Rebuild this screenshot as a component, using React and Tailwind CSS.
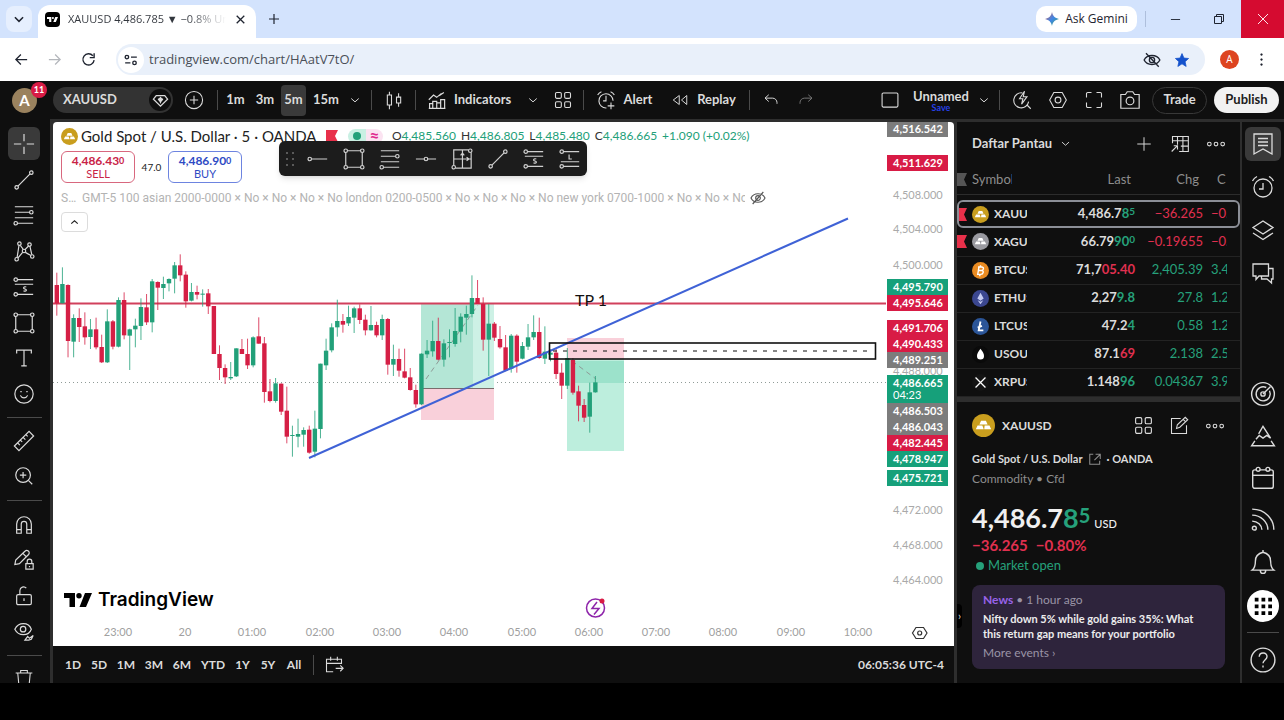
import React from 'react'
import clsx from 'clsx'

const GREEN = '#22a079'
const RED = '#d51f45'

// y positions of each bar: [up, high, bodyTop, bodyBottom, low], thirds of a pixel under 240
const BARS = [
  [0, 98, 135, 190, 227], [1, 82, 132, 190, 190], [0, 133, 135, 303, 352], [1, 223, 234, 305, 352],
  [0, 205, 234, 261, 306], [0, 217, 259, 292, 314], [1, 237, 268, 291, 327], [0, 233, 268, 322, 328],
  [0, 284, 321, 367, 369], [1, 208, 244, 367, 369], [0, 240, 244, 320, 328], [1, 172, 180, 320, 322],
  [0, 157, 180, 286, 298], [1, 266, 268, 287, 390], [1, 236, 257, 268, 322], [1, 175, 201, 258, 300],
  [0, 162, 202, 247, 255], [1, 117, 124, 247, 277], [0, 124, 126, 143, 210], [1, 110, 132, 144, 177],
  [1, 115, 117, 130, 154], [1, 66, 76, 116, 160], [0, 43, 76, 106, 124], [0, 94, 104, 184, 203],
  [1, 129, 156, 182, 184], [0, 137, 156, 164, 178], [1, 148, 161, 163, 200], [0, 147, 160, 199, 222],
  [0, 198, 198, 342, 342], [0, 316, 342, 384, 420], [0, 373, 384, 412, 432], [1, 366, 411, 415, 420],
  [1, 325, 325, 409, 411], [0, 297, 327, 342, 342], [0, 296, 342, 376, 387], [1, 289, 292, 376, 382],
  [0, 232, 289, 311, 311], [0, 291, 310, 456, 488], [0, 417, 454, 483, 487], [1, 414, 430, 483, 488],
  [0, 430, 431, 515, 525], [0, 440, 512, 590, 610], [1, 557, 585, 588, 650], [1, 536, 582, 590, 622],
  [1, 562, 570, 584, 620], [0, 557, 569, 638, 641], [1, 512, 566, 635, 652], [1, 371, 371, 567, 595],
  [1, 296, 332, 376, 390], [1, 250, 262, 331, 337], [1, 179, 243, 262, 290], [0, 222, 243, 254, 278],
  [1, 197, 231, 250, 258], [1, 200, 205, 233, 279], [0, 193, 205, 240, 252], [0, 224, 239, 271, 286],
  [1, 198, 255, 271, 272], [0, 245, 255, 286, 292], [1, 224, 237, 286, 300], [0, 234, 237, 374, 404],
  [1, 314, 357, 374, 408], [0, 326, 357, 392, 410], [0, 326, 394, 413, 415], [0, 384, 412, 450, 452],
  [0, 434, 450, 493, 503], [1, 340, 341, 493, 495], [1, 300, 332, 343, 354], [1, 242, 303, 334, 350],
  [0, 233, 303, 359, 361], [1, 298, 310, 359, 380], [1, 268, 306, 308, 352], [1, 204, 273, 312, 320],
  [1, 220, 230, 275, 307], [1, 197, 222, 233, 284], [1, 106, 174, 222, 232], [0, 120, 174, 192, 192],
  [0, 172, 192, 299, 332], [1, 192, 251, 299, 408], [0, 246, 251, 293, 303], [0, 258, 297, 322, 326],
  [0, 285, 322, 392, 394], [1, 282, 287, 386, 398], [0, 283, 287, 365, 398], [1, 306, 318, 356, 358],
  [1, 252, 292, 320, 330], [1, 226, 276, 292, 300], [0, 233, 276, 354, 356], [1, 259, 335, 356, 372],
  [1, 328, 338, 344, 364], [0, 325, 338, 402, 417], [0, 370, 398, 437, 477], [1, 324, 354, 437, 447],
  [0, 354, 360, 458, 464], [0, 437, 454, 497, 544], [0, 477, 495, 533, 546], [1, 428, 457, 530, 578],
  [1, 408, 427, 457, 458],
]

const AXIS = [
  ['4,508.000', 195], ['4,504.000', 229], ['4,500.000', 265], ['4,488.000', 371],
  ['4,472.000', 510], ['4,468.000', 545], ['4,464.000', 580],
]

const TAGS = [
  ['4,516.542', 129, '#7c7c7c'], ['4,511.629', 163, '#d81b45'], ['4,495.790', 287, '#16a07a'],
  ['4,495.646', 303, '#d81b45'], ['4,491.706', 328, '#d81b45'], ['4,490.433', 344, '#d81b45'],
  ['4,489.251', 360, '#7c7c7c'], ['4,486.503', 411, '#7c7c7c'], ['4,486.043', 427, '#7c7c7c'],
  ['4,482.445', 443, '#d81b45'], ['4,478.947', 459, '#16a07a'], ['4,475.721', 478, '#16a07a'],
]

const TIMES = [
  ['23:00', 118], ['20', 185], ['01:00', 252], ['02:00', 320], ['03:00', 387], ['04:00', 454],
  ['05:00', 522], ['06:00', 589], ['07:00', 656], ['08:00', 723], ['09:00', 791], ['10:00', 858],
]

const Icon = ({ size = 24, className, children, sw = 1.3 }) => (
  <svg
    width={size}
    height={size}
    viewBox="0 0 24 24"
    fill="none"
    stroke="currentColor"
    strokeWidth={sw}
    className={clsx('shrink-0', className)}
    aria-hidden="true"
  >
    {children}
  </svg>
)

const Dot = ({ x, y }) => <circle cx={x} cy={y} r="1.9" />

const icons = {
  cross: <path d="M12 1v8M12 15v8M1 12h8M15 12h8" />,
  trend: <><Dot x={4} y={20} /><Dot x={20} y={4} /><path d="M5.4 18.6 18.6 5.4" /></>,
  fib: <><path d="M2 3h20M2 9h16M2 15h20M5 21h17" /><Dot x={20} y={9} /><Dot x={3} y={21} /></>,
  pattern: (
    <>
      <Dot x={4} y={21} /><Dot x={7} y={4} /><Dot x={12} y={12} /><Dot x={18} y={5} /><Dot x={21} y={18} />
      <path d="m4.500 19 2-13M8 6l3 4M13 10.500l4-4M18.500 7l2 9M5.500 19.500 10.500 13.500M13.500 13.500l6 3.500" />
    </>
  ),
  short: (
    <>
      <path d="M5 4h17M2 9h20M5 20h17" /><Dot x={3} y={4} /><Dot x={3} y={20} />
      <path d="M14.500 12c-3-1-4 1.800-1.500 2.200s2 3-1.500 2" />
    </>
  ),
  long: (
    <>
      <path d="M5 4h17M5 20h17M2 15h20M11 7v5h3" /><Dot x={3} y={4} /><Dot x={3} y={20} />
    </>
  ),
  rect: <><path d="M5 3h14M5 21h14M3 5v14M21 5v14" /><Dot x={3} y={3} /><Dot x={21} y={3} /><Dot x={3} y={21} /><Dot x={21} y={21} /></>,
  text: <path d="M4 7V3.500h16V7M12 3.500v17M9 20.500h6" />,
  smile: <><circle cx="12" cy="12" r="10" /><path d="M8 9.500h1.500M14.500 9.500H16M8 13.500c1.500 3.500 6.500 3.500 8 0" /></>,
  ruler: <path d="m1.500 17.500 16-16 5 5-16 16zM5 14l2.500 2.500M8 11l2 2M11 8l2.500 2.500M14 5l2 2" />,
  zoom: <><circle cx="11" cy="11" r="8" /><path d="M11 7.500v7M7.500 11h7M17 17l4 4" /></>,
  magnet: <path d="M4 21V11a8 8 0 0 1 16 0v10h-5V11a3 3 0 0 0-6 0v10zM4 17h5M15 17h5" />,
  pencilLock: (
    <>
      <path d="m2 17 1-5L13 2.500a2.500 2.500 0 0 1 4 3.500L7 16zM11 5l3.500 3.500" />
      <path d="M14 16h8v6h-8zM15.500 16v-2.500a2.500 2.500 0 0 1 5 0V16M18 18.500v1.500" />
    </>
  ),
  unlock: <><rect x="4" y="10.500" width="16" height="11" rx="1.500" /><path d="M7.500 10V6a4 4 0 0 1 7-2.500M12 14.500v3" /></>,
  eye: (
    <>
      <path d="M2 10c4-8 15-8 18 0-3 8-14 8-18 0z" /><circle cx="11" cy="10" r="3" />
      <path d="m13 22 3-4 2 2 4-3-2 4-3 1z" />
    </>
  ),
  trash: <path d="M2 6h20M8 6V3h8v3M4.500 6l1.500 16h12l1.500-16" />,
  hline: <><path d="M5 12h17" /><Dot x={3} y={12} /></>,
  hray: <><path d="M1 12h9M14 12h9" /><Dot x={12} y={12} /></>,
  gann: (
    <>
      <path d="M5 22h17V5M19 2H3v17M12.500 2v20M3 12h19M12.500 5.500l-2 2.500M12.500 5.500l2 2.500M19.500 12 17 10M19.500 12 17 14" />
      <Dot x={3} y={21} /><Dot x={21} y={3} />
    </>
  ),
  chevron: <path d="m7 10 5 4.500 5-4.500" />,
  chevronUp: <path d="m6 14 6-5 6 5" />,
  plusCircle: <><circle cx="12" cy="12" r="10.300" /><path d="M12 7v10M7 12h10" /></>,
  candles: <path d="M4 6h5v12H4zM6.500 2v4M6.500 18v5M15 8.500h5v7h-5zM17.500 4v4.500M17.500 15.500V20" />,
  indicators: <><path d="M1 11l6-6 4 3 6-5M14 6l6-4" /><path d="M2 22v-6h4v6M6 22v-9h5v9M11 22v-7h5v7M16 22V11h5v11zM1 22h21" /></>,
  grid: <><rect x="3" y="3" width="7" height="7" rx="1.500" /><rect x="14" y="3" width="7" height="7" rx="1.500" /><rect x="3" y="14" width="7" height="7" rx="1.500" /><rect x="14" y="14" width="7" height="7" rx="1.500" /></>,
  alert: <><path d="M20.500 13a8.500 8.500 0 1 0-8 8.500M12 7v6H8.500M2 6c1-2 2.500-3.200 4.500-4M22 6c-1-2-2.500-3.200-4.500-4M18 15v8M14 19h8" /></>,
  clock: <><circle cx="12" cy="13" r="9" /><path d="M12 8v6H8M1.500 6C2.500 4 4 2.500 6 1.500M22.500 6c-1-2-2.500-3.500-4.500-4.500" /></>,
  replay: <path d="M11 6v12l-8-6zM21 6v12l-7-6z" />,
  undo: <path d="M9 5 4 9.500 9 14M4 9.500h10a6 6 0 0 1 6 6V17" />,
  redo: <path d="m15 5 5 4.500-5 4.500M20 9.500H10a6 6 0 0 0-6 6V17" />,
  square: <rect x="2.500" y="3.500" width="19" height="17" rx="1.500" />,
  flash: <><path d="M12.500 3.500A9 9 0 1 0 20 14M18 18l4.500 4.500" /><path d="m15 1.500-6 9h4l-1.500 6.500 6.500-9h-4.500z" /></>,
  hex: <><path d="M7 3h10l5 9-5 9H7l-5-9z" /><circle cx="12" cy="12" r="3.500" /></>,
  full: <path d="M3 9V4.500A1.500 1.500 0 0 1 4.500 3H9M15 3h4.500A1.500 1.500 0 0 1 21 4.500V9M21 15v4.500a1.500 1.500 0 0 1-1.500 1.500H15M9 21H4.500A1.500 1.500 0 0 1 3 19.500V15" />,
  camera: <><path d="M2 6h5l2-3h6l2 3h5v15H2z" /><circle cx="12" cy="13" r="4.200" /></>,
  plus: <path d="M12 3v18M3 12h18" />,
  table: <path d="M3 11V3h19v18H11M3 8h19M9 3v10M15.500 3v18M13 14.500h9M2 21l7-7M4.500 14H9v4.500" />,
  dots: <><circle cx="4" cy="12" r="2.200" /><circle cx="12" cy="12" r="2.200" /><circle cx="20" cy="12" r="2.200" /></>,
  list: <path d="M3 2h18v20l-9-5-9 5zM7 6.500h10M7 10h10M7 13.500h10" />,
  layers: <path d="m12 3 10 6.500-10 6.500L2 9.500zM2 15l10 6.500L22 15" />,
  chat: <path d="M2 3h15.500v12H8l-3 3.500V15H2zM17.500 7.500H22V18h-1.500v4L16 18h-5.500v-3" />,
  radar: <><circle cx="12" cy="12" r="10.500" /><path d="M18 9a6.500 6.500 0 1 1-3-3M12 12l7-7" /><circle cx="12" cy="12" r="2" /></>,
  pyramid: <path d="m8 10 4-7 7 11-3.500-2.500L12 14l-3.500-2.500L5.500 15M4.500 16.500 1.500 21h21l-3-4.500" />,
  calendar: <><rect x="2.500" y="4.500" width="19" height="17" rx="2" /><path d="M2.500 9.500h19" /><circle cx="7.500" cy="4" r="1.800" fill="#0f0f0f" /><circle cx="16.500" cy="4" r="1.800" fill="#0f0f0f" /></>,
  rss: <><path d="M2 2c12 0 20 9 20 19M2 7.500c8 0 14.500 6.500 14.500 13.500M2 13c5 0 9 4 9 8" /><circle cx="4" cy="19.500" r="1.800" /></>,
  bell: <path d="M2 19.500h20c-2.500-2-3-4-3-8.500C19 6.500 16 4 12 3 8 4 5 6.500 5 11c0 4.500-.5 6.500-3 8.500zM12 1v2M9.500 19.500c0 4 5 4 5 0" />,
  help: <><circle cx="12" cy="12" r="11" /><path d="M8.500 9c.3-5 7.500-4.300 7.200 0C15.500 12 12 12 12 15M12 17v2" /></>,
  edit: <path d="M14 3H3v18h18V11M9 15l1-4.500 9.500-9 3 3-9.500 9zM17 4l3 3" />,
  link: <path d="M9 4H3v17h17v-6M13 4h8v8M21 4 11 14" />,
  goto: <path d="M3 10h18V5H3v15h8M8 2v5M16 2v5M14 16h9M19.500 12.500 23 16l-3.500 3.500" />,
  eyeOff: <path d="M1.500 12c4-8.500 17-8.500 21 0-4 8.500-17 8.500-21 0zM4 21 20 3M15.500 12a3.500 3.500 0 1 1-7 0 3.500 3.500 0 0 1 7 0z" />,
  gem: <><path d="M6 5h12l4 5-10 10L2 10z" /><path d="M12 8c1 1.500 1.500 2 3.500 2.500-2 .5-2.500 1.500-3.500 4-1-2.500-1.500-3.500-3.500-4C10.500 10 11 9.500 12 8z" fill="currentColor" /></>,
}

const IconButton = ({ name, label, className, size, sw }) => (
  <button type="button" aria-label={label || name} className={clsx('flex shrink-0 items-center justify-center', className)}>
    <Icon size={size} sw={sw}>{icons[name]}</Icon>
  </button>
)

const Sep = ({ className }) => <div className={clsx('h-5 w-px shrink-0 bg-[#4a4a4a]', className)} />

const GoldIcon = ({ className, color = '#c99e1e' }) => (
  <svg viewBox="0 0 24 24" className={clsx('shrink-0', className)} aria-hidden="true">
    <circle cx="12" cy="12" r="12" fill={color} />
    <path d="M9.500 7h5l1.800 4H7.700zM5.800 12h5l1.400 4H4zM13.200 12h5l1.800 4h-7.200z" fill="#fff" />
  </svg>
)

const TVMark = ({ className }) => (
  <svg viewBox="0 0 28 14" className={className} fill="currentColor" aria-hidden="true">
    <path d="M0 0h11v14H5.500V5H0zM21 0h7l-6 14h-6.500z" />
    <circle cx="15" cy="2.700" r="2.700" />
  </svg>
)

const BrowserChrome = () => (
  <div className="font-['Open_Sans',sans-serif] text-[#1f2430]">
    <div className="flex h-[38px] items-center bg-[#d3e3fd]">
      <button type="button" aria-label="Search tabs" className="ml-1.5 flex size-[26px] items-center justify-center rounded-lg bg-[#e6effe]">
        <Icon size={14} sw={2.6}><path d="m5 9 7 7 7-7" /></Icon>
      </button>
      <div className="ml-1.5 flex h-[33px] w-[218px] items-center self-end rounded-t-xl bg-white pb-1 pl-[7px] pr-2">
        <span className="flex size-[15px] items-center justify-center rounded-sm bg-black text-white"><TVMark className="w-[11px]" /></span>
        <span className="ml-2 w-[158px] overflow-hidden whitespace-nowrap bg-linear-to-r from-[#32363d] from-75% to-white bg-clip-text text-[11px] text-transparent">
          XAUUSD 4,486.785 ▼ −0.8% Unnamed
        </span>
        <button type="button" aria-label="Close tab" className="ml-2"><Icon size={13} sw={2.4}><path d="M5 5l14 14M19 5 5 19" /></Icon></button>
      </div>
      <button type="button" aria-label="New tab" className="ml-3"><Icon size={12} sw={2.4}><path d="M12 2v20M2 12h20" /></Icon></button>
      <div className="flex-1" />
      <button type="button" className="flex h-[26px] w-[101px] items-center justify-center gap-1.5 rounded-[10px] bg-white text-[12px] font-medium">
        <svg viewBox="0 0 24 24" className="size-3.5" aria-hidden="true">
          <defs>
            <linearGradient id="spark" x1="0" y1="0" x2="1" y2="1">
              <stop offset="0" stopColor="#e0604c" /><stop offset=".5" stopColor="#3f86e8" /><stop offset="1" stopColor="#3aa560" />
            </linearGradient>
          </defs>
          <path d="M12 0c1.500 7 5 10.500 12 12-7 1.500-10.500 5-12 12-1.500-7-5-10.500-12-12C7 10.500 10.500 7 12 0z" fill="url(#spark)" />
        </svg>
        Ask Gemini
      </button>
      <div className="ml-2 h-4 w-px bg-[#aebfdc]" />
      <button type="button" aria-label="Minimize" className="ml-2 flex w-[43px] justify-center"><Icon size={11} sw={2}><path d="M2 12h20" /></Icon></button>
      <button type="button" aria-label="Restore" className="flex w-11 justify-center"><Icon size={12} sw={2}><path d="M3 7h14v14H3zM7 7V3h14v14h-4" /></Icon></button>
      <button type="button" aria-label="Close" className="flex h-full w-[43px] items-center justify-center bg-[#d50b30] text-white"><Icon size={12} sw={1.8}><path d="M2 2l20 20M22 2 2 22" /></Icon></button>
    </div>
    <div className="flex h-[43px] items-center bg-white">
      <button type="button" aria-label="Back" className="ml-[14px]"><Icon size={15} sw={2}><path d="M11 4 3 12l8 8M3 12h18" /></Icon></button>
      <button type="button" aria-label="Forward" className="ml-[18px] text-[#b4b7bc]"><Icon size={15} sw={2}><path d="m13 4 8 8-8 8M21 12H3" /></Icon></button>
      <button type="button" aria-label="Reload" className="ml-[19px]"><Icon size={15} sw={2.2}><path d="M19 6a9 9 0 1 0 2 7M21 2v7h-7" /></Icon></button>
      <div className="ml-5 flex h-[31px] flex-1 items-center rounded-full bg-[#e9f0fa]">
        <span className="ml-0.5 flex size-[26px] items-center justify-center rounded-full bg-white">
          <Icon size={14} sw={2.3}><circle cx="5" cy="7" r="3" /><path d="M12 7h10M2 17h9" /><circle cx="18" cy="17" r="3" /></Icon>
        </span>
        <input aria-label="Address" defaultValue="tradingview.com/chart/HAatV7tO/" className="ml-[5px] w-60 bg-transparent text-[13px] text-[#4a4f57] outline-none" />
        <div className="flex-1" />
        <Icon size={18} sw={1.8}><path d="M1.500 12c4-8 17-8 21 0-4 8-17 8-21 0zM4 3l17 18" /><circle cx="12" cy="12" r="3.500" /></Icon>
        <Icon size={14} className="ml-[14px] mr-4 text-[#1452cc]"><path fill="currentColor" d="m12 1 3.300 7.700 8 .7-6 5.400 1.800 8.200L12 18.600 4.900 23l1.800-8.200-6-5.400 8-.7z" /></Icon>
      </div>
      <span className="ml-[15px] flex size-[19px] items-center justify-center rounded-full bg-[#dd4420] text-[10px] text-white">A</span>
      <button type="button" aria-label="Menu" className="mx-[15px]"><Icon size={15}><path fill="currentColor" d="M11 3h2v2h-2zM11 11h2v2h-2zM11 19h2v2h-2z" /></Icon></button>
    </div>
  </div>
)

const Header = () => (
  <header className="flex h-[38px] shrink-0 items-center bg-[#0f0f0f] text-[13px] font-bold">
    <div className="relative ml-3 flex size-[25px] items-center justify-center rounded-full bg-[#9a825e] text-[15px] text-white">
      A
      <span className="absolute -right-2.5 -top-1.5 flex size-4 items-center justify-center rounded-full bg-[#d81b45] text-[9px]">11</span>
    </div>
    <button type="button" className="ml-4 flex h-[26px] w-[120px] items-center justify-between rounded-full bg-[#333] pl-2.5 pr-0.5">
      XAUUSD
      <span className="flex size-[22px] items-center justify-center rounded-full bg-[#0f0f0f]"><Icon size={17} sw={1.8}>{icons.gem}</Icon></span>
    </button>
    <IconButton name="plusCircle" label="Compare" size={20} className="ml-1 w-[34px]" />
    <Sep className="ml-1.5 mr-[3px]" />
    <button type="button" className="w-[29px]">1m</button>
    <button type="button" className="w-[30px]">3m</button>
    <button type="button" className="ml-px h-[31px] w-[25px] rounded bg-[#3a3a3a]">5m</button>
    <button type="button" className="ml-1 w-[32px]">15m</button>
    <IconButton name="chevron" label="Intervals" size={18} className="ml-1 w-[18px]" />
    <Sep className="ml-[7px]" />
    <IconButton name="candles" size={20} className="w-[43px]" />
    <Sep />
    <button type="button" className="ml-3 flex items-center gap-[7px]"><Icon size={19} sw={1.5}>{icons.indicators}</Icon><span className="w-[58px] text-left">Indicators</span></button>
    <IconButton name="chevron" label="Favorites" size={18} className="ml-3 w-[18px]" />
    <IconButton name="grid" label="Templates" size={20} className="ml-2.5 w-[21px]" />
    <Sep className="ml-2.5" />
    <button type="button" className="ml-3 flex items-center gap-[7px]"><Icon size={20}>{icons.alert}</Icon><span className="w-[30px]">Alert</span></button>
    <button type="button" className="ml-[18px] flex items-center gap-[7px]"><Icon size={18}>{icons.replay}</Icon><span className="w-[41px]">Replay</span></button>
    <Sep className="ml-3" />
    <IconButton name="undo" size={18} className="w-[41px]" />
    <IconButton name="redo" size={18} className="w-[29px] text-[#777]" />
    <div className="flex-1" />
    <IconButton name="square" label="Layout" size={20} />
    <div className="ml-3 flex w-[58px] flex-col items-center">
      <span className="leading-[14px]">Unnamed</span>
      <button type="button" className="text-[9px] leading-[9px] text-[#2540e8]">Save</button>
    </div>
    <IconButton name="chevron" label="Layouts" size={18} className="ml-[5px]" />
    <Sep className="ml-1.5" />
    <IconButton name="flash" label="Quick search" size={20} className="ml-1 w-9" />
    <IconButton name="hex" label="Settings" size={20} className="w-9" />
    <IconButton name="full" label="Fullscreen" size={20} className="w-9" />
    <IconButton name="camera" label="Snapshot" size={22} className="w-9" />
    <button type="button" className="ml-1 h-[27px] w-[55px] rounded-full border border-[#383838]">Trade</button>
    <button type="button" className="ml-[7px] mr-[5px] h-[26px] w-[65px] rounded-full bg-[#f2f2f2] text-[#1c1c1c]">Publish</button>
  </header>
)

const ToolGroup = ({ names, className }) => (
  <div className={clsx('flex w-full shrink-0 flex-col items-center justify-around', className)}>
    {names.map((n) => (
      <IconButton key={n} name={n} size={22} className={clsx('h-[33px] w-8 rounded-md', n === 'cross' && 'bg-[#3a3a3a]')} />
    ))}
  </div>
)

const LeftTools = () => (
  <aside className="flex w-[50px] shrink-0 flex-col items-center overflow-hidden bg-[#0f0f0f] pr-0.5 pt-[7px]">
    <ToolGroup className="h-[286px]" names={['cross', 'trend', 'fib', 'pattern', 'short', 'rect', 'text', 'smile']} />
    <div className="my-[5px] h-px w-[35px] shrink-0 bg-[#4a4a4a]" />
    <ToolGroup className="h-[71px]" names={['ruler', 'zoom']} />
    <div className="my-1.5 h-px w-[35px] shrink-0 bg-[#4a4a4a]" />
    <ToolGroup className="h-[142px]" names={['magnet', 'pencilLock', 'unlock', 'eye']} />
    <div className="mb-3 mt-1.5 h-px w-[35px] shrink-0 bg-[#4a4a4a]" />
    <IconButton name="trash" size={20} />
  </aside>
)

const Chart = () => (
  <svg viewBox="53 122 901 524" className="block size-full" fontFamily="Lato, sans-serif" role="img" aria-label="XAUUSD 5 minute chart">
    <path d="M53 382.500H886" stroke="#8f9b97" strokeDasharray="1 3" />
    <rect x="421" y="304" width="73" height="85" fill="#cdf1e5" />
    <rect x="421" y="304" width="52" height="85" fill="#b4e6d6" />
    <rect x="421" y="389" width="73" height="31" fill="#f9d0da" />
    <path d="M421 388.500h73" stroke="#7a6c6c" />
    <rect x="567" y="338" width="57" height="21" fill="#f9d0da" />
    <rect x="567" y="359" width="57" height="92" fill="#bdeedd" />
    <rect x="571" y="361" width="53" height="22" fill="#9ce2cb" />
    <path d="M426 379l52-74M572 361l24 18" stroke="#8d9a96" strokeDasharray="5 4" />
    <path d="M53 303.500H886" stroke="#d1405c" strokeWidth="2" />
    {BARS.map(([up, h, t, b, l], i) => {
      const x = 56.8 + 5.61 * i
      const color = up ? GREEN : RED
      return (
        <g key={i} fill={color}>
          <rect x={x - 0.5} y={240 + h / 3} width="1" height={(l - h) / 3} opacity=".8" />
          <rect x={x - 2.2} y={240 + t / 3} width="4.4" height={Math.max(1, (b - t) / 3)} />
        </g>
      )
    })}
    <path d="M309 458 848 218.500" stroke="#3f62d6" strokeWidth="2" />
    <rect x="549.500" y="343" width="326" height="16" fill="none" stroke="#111" strokeWidth="1.600" />
    <path d="M553 351h320" stroke="#111" strokeDasharray="4 6" />
    <text x="575" y="306" fontSize="16" fill="#111">TP 1</text>

    <g fontSize="11" fill="#a9a9a9">
      {AXIS.map(([label, y]) => <text key={label} x="893" y={y + 4}>{label}</text>)}
    </g>
    <g fontSize="11" fill="#a0a0a0" textAnchor="middle">
      {TIMES.map(([label, x]) => <text key={label} x={x} y="636">{label}</text>)}
    </g>
    <g fontSize="11" fontWeight="700" fill="#fff">
      {TAGS.map(([label, y, fill]) => (
        <g key={label}>
          <rect x="887" y={y - 8} width="61" height="16" fill={fill} />
          <text x="893" y={y + 4}>{label}</text>
        </g>
      ))}
      <rect x="887" y="375" width="61" height="28" fill="#16a07a" />
      <text x="893" y="387">4,486.665</text>
      <text x="893" y="399" fontWeight="400">04:23</text>
    </g>

    <g fill="none" stroke="#8e24aa" strokeWidth="1.500">
      <circle cx="595.500" cy="608" r="9" />
      <path d="m597 602-5 6.500h7l-5 6" />
    </g>
    <circle cx="602" cy="601" r="2.500" fill="#d81b45" />
    <g fill="none" stroke="#333" strokeWidth="1.200">
      <path d="M916 627.500h7.500l3.500 5.500-3.500 5.500H916l-3.500-5.500z" />
      <circle cx="919.700" cy="633" r="2" />
    </g>
  </svg>
)

const Ohlc = ({ k, v }) => <span><span className="text-[#333]">{k}</span>{v}</span>

const QUICK = ['hline', 'rect', 'fib', 'hray', 'gann', 'trend', 'short', 'long']

const ChartPane = () => (
  <section className="relative min-h-0 flex-1 overflow-hidden rounded-t bg-white">
    <Chart />
    <div className="absolute left-2 top-1 text-[#222]">
      <div className="flex h-5 items-center whitespace-nowrap">
        <GoldIcon className="size-[17px]" />
        <span className="ml-[3px] w-[245px] text-[15px]">Gold Spot / U.S. Dollar · 5 · OANDA</span>
        <svg viewBox="0 0 12 12" className="size-3" aria-hidden="true"><path d="M0 0h12L9 6l3 6H0z" fill="#e8304a" /></svg>
        <span className="ml-2.5 flex h-[15px] w-[18px] items-center justify-center rounded-l-full bg-[#c9f0e3]"><span className="size-2 rounded-full bg-[#22a079]" /></span>
        <span className="flex h-[15px] w-[17px] items-center justify-center rounded-r-full bg-[#fbe3f1] text-[17px] font-bold text-[#e0288e]">≈</span>
        <span className="ml-[9px] flex gap-[5px] text-[12px] text-[#22a079]">
          <Ohlc k="O" v="4,485.560" />
          <Ohlc k="H" v="4,486.805" />
          <Ohlc k="L" v="4,485.480" />
          <Ohlc k="C" v="4,486.665" />
          <span>+1.090 (+0.02%)</span>
        </span>
      </div>
      <div className="mt-[5px] flex items-center">
        <button type="button" className="h-8 w-[74px] rounded-md border border-[#d8677e] text-[11px] leading-[13px] text-[#c92347]">
          <span className="block text-[12px] font-bold">4,486.43<span className="align-top text-[9px]">0</span></span>
          SELL
        </button>
        <span className="w-[33px] text-center text-[10px]">47.0</span>
        <button type="button" className="h-8 w-[74px] rounded-md border border-[#6d84e0] text-[11px] leading-[13px] text-[#2f4bc4]">
          <span className="block text-[12px] font-bold">4,486.90<span className="align-top text-[9px]">0</span></span>
          BUY
        </button>
      </div>
      <div className="mt-[7px] flex h-4 items-center font-['Roboto',sans-serif] text-[12px] text-[#b3b3b3]">
        <span className="w-[21px]">S…</span>
        <span className="w-[663px] overflow-hidden whitespace-nowrap">
          GMT-5 100 asian 2000-0000 × No × No × No × No london 0200-0500 × No × No × No × No new york 0700-1000 × No × No × No × No
        </span>
        <Icon size={16} sw={1.7} className="ml-[5px] text-[#555]">{icons.eyeOff}</Icon>
      </div>
      <button type="button" aria-label="Collapse legend" className="mt-1.5 flex h-5 w-[27px] items-center justify-center rounded-sm border border-[#dcdcdc]">
        <Icon size={13} sw={2.2}>{icons.chevronUp}</Icon>
      </button>
    </div>
    <div className="absolute left-[226px] top-[19px] flex h-[35px] items-center rounded-md bg-[#1c1c1c] text-[#d0d0d0] shadow-md">
      <svg viewBox="0 0 8 14" className="ml-[7px] mr-1.5 h-3.5 w-2 text-[#5a5a5a]" fill="currentColor" aria-hidden="true">
        <path d="M0 0h2v2H0zM6 0h2v2H6zM0 6h2v2H0zM6 6h2v2H6zM0 12h2v2H0zM6 12h2v2H6z" />
      </svg>
      {QUICK.map((n) => <IconButton key={n} name={n} size={22} className="h-9 w-9 last:w-[35px]" />)}
    </div>
    <div className="absolute bottom-9 left-[11px] flex items-center gap-1.5 text-black">
      <TVMark className="w-7" />
      <span className="font-['Inter',sans-serif] text-[19px] leading-5 font-semibold">TradingView</span>
    </div>
  </section>
)

const RANGES = [['1D', 'w-[26px]'], ['5D', 'w-[26px]'], ['1M', 'w-7'], ['3M', 'w-7'], ['6M', 'w-7'], ['YTD', 'w-[34px]'], ['1Y', 'w-[25px]'], ['5Y', 'w-[26px]'], ['All', 'w-[26px]']]

const BottomBar = () => (
  <div className="flex h-[37px] shrink-0 items-center bg-[#0f0f0f] px-[7px] text-[12px] font-bold">
    <div className="flex">
      {RANGES.map(([label, w]) => <button key={label} type="button" className={w}>{label}</button>)}
    </div>
    <Sep className="ml-1.5" />
    <IconButton name="goto" label="Go to date" size={20} className="ml-2.5" />
    <button type="button" className="ml-auto mr-[3px]">06:05:36 UTC-4</button>
  </div>
)

const UP = 'text-[#26a17b]'
const DOWN = 'text-[#e0304f]'

// last price is split in the part that stands and the part that just moved
const WATCH = [
  { sym: 'XAUUSD', flag: true, last: '4,486.7', tick: '8', pip: '5', tc: UP, chg: '−36.265', pct: '−0.80%', cc: DOWN },
  { sym: 'XAGUSD', flag: true, last: '66.79', tick: '90', pip: '0', tc: UP, chg: '−0.19655', pct: '−0.29%', cc: DOWN },
  { sym: 'BTCUSD', last: '71,7', tick: '05.40', tc: DOWN, chg: '2,405.39', pct: '3.47%', cc: UP },
  { sym: 'ETHUSD', last: '2,27', tick: '9.8', tc: UP, chg: '27.8', pct: '1.23%', cc: UP },
  { sym: 'LTCUSD', last: '47.2', tick: '4', tc: UP, chg: '0.58', pct: '1.24%', cc: UP },
  { sym: 'USOUSD', last: '87.1', tick: '69', tc: DOWN, chg: '2.138', pct: '2.52%', cc: UP },
  { sym: 'XRPUSD', last: '1.148', tick: '96', tc: UP, chg: '0.04367', pct: '3.95%', cc: UP },
]

const CoinIcon = ({ sym }) => {
  if (sym === 'XAUUSD') return <GoldIcon className="size-[17px]" />
  if (sym === 'XAGUSD') return <GoldIcon className="size-[17px]" color="#9a9aa0" />
  const fills = { BTCUSD: '#e98b22', ETHUSD: '#3b4790', LTCUSD: '#2b5598', USOUSD: '#0a0a0a', XRPUSD: '#141414' }
  return (
    <svg viewBox="0 0 24 24" className="size-[17px] shrink-0" fill="none" stroke="#fff" strokeWidth="2" aria-hidden="true">
      <circle cx="12" cy="12" r="12" fill={fills[sym]} stroke="none" />
      {sym === 'BTCUSD' && <path d="m10 6-2 12M8.500 7h5c4 0 3 5 0 5H9M13.500 12c4 0 2.500 5.500-1 5.500H7M12 4.500V7M11 17.500V20" />}
      {sym === 'ETHUSD' && <path d="m12 4 4.500 8-4.500 3-4.500-3zM8 14.500l4 5.500 4-5.500-4 2z" fill="#c5cbf2" stroke="none" />}
      {sym === 'LTCUSD' && <path d="M12 5 9.500 17.500H16M8 13.500l6-2.500" strokeWidth="2.600" />}
      {sym === 'USOUSD' && <path d="M12 4c3 4 5 7 5 10a5 5 0 0 1-10 0c0-3 2-6 5-10z" fill="#fff" stroke="none" />}
      {sym === 'XRPUSD' && <path d="m5 5 14 14M19 5 5 19" strokeWidth="1.800" />}
    </svg>
  )
}

const Flag = ({ color }) => (
  <svg viewBox="0 0 10 13" className="h-[13px] w-2.5 shrink-0" aria-hidden="true"><path d="M0 0h10L7 6.500l3 6.500H0z" fill={color} /></svg>
)

const Watchlist = () => (
  <div className="h-[275px] shrink-0 bg-[#0f0f0f]">
    <div className="flex h-[43px] items-center pl-[15px] pr-3.5">
      <h2 className="text-[13px] font-bold">Daftar Pantau</h2>
      <IconButton name="chevron" label="Choose list" size={17} className="ml-[5px]" />
      <div className="flex-1" />
      <IconButton name="plus" label="Add symbol" size={18} className="w-9" />
      <IconButton name="table" size={20} className="w-9" />
      <IconButton name="dots" label="More" size={20} className="ml-2" />
    </div>
    <table className="w-full table-fixed border-collapse whitespace-nowrap text-[13px] font-bold">
      <colgroup>
        <col className="w-[70px]" />
        <col />
        <col className="w-[68px]" />
        <col className="w-[24px]" />
        <col className="w-[13px]" />
      </colgroup>
      <thead>
        <tr className="h-[29px] border-b border-[#2c2c2c] text-[#8d8d8d]">
          <th className="p-0 text-left font-normal"><div className="flex h-5 items-center gap-[5px] overflow-hidden"><Flag color="#555" /><span className="w-10 overflow-hidden">Symbol</span></div></th>
          <th className="p-0 pr-1 text-right font-normal">Last</th>
          <th className="p-0 pr-1 text-right font-normal">Chg</th>
          <th className="overflow-hidden p-0 pl-3.5 text-left font-normal">C</th>
          <th className="p-0" />
        </tr>
      </thead>
      <tbody>
        <tr className="h-1.5" />
        {WATCH.map((r) => (
          <tr
            key={r.sym}
            className={clsx('h-7', r.sym === 'XAUUSD' ? 'rounded-md outline-2 -outline-offset-2 outline-[#8b8e96]' : 'border-b border-[#232323]')}
          >
            <td className="p-0">
              <div className="flex items-center overflow-hidden">
                {r.flag ? <Flag color="#e8304a" /> : <span className="w-2.5 shrink-0" />}
                <span className="ml-[5px] flex"><CoinIcon sym={r.sym} /></span>
                <span className="ml-[5px] w-[33px] overflow-hidden text-[12px]">{r.sym}</span>
              </div>
            </td>
            <td className="p-0 text-right">
              {r.last}<span className={r.tc}>{r.tick}{r.pip && <span className="align-top text-[10px]">{r.pip}</span>}</span>
            </td>
            <td className={clsx('p-0 text-right font-normal', r.cc)}>{r.chg}</td>
            <td className={clsx('overflow-hidden p-0 pl-2 font-normal', r.cc)}>{r.pct}</td>
            <td className="p-0" />
          </tr>
        ))}
      </tbody>
    </table>
  </div>
)

const Details = () => (
  <div className="min-h-0 flex-1 bg-[#0f0f0f] px-[15px] pt-[11px]">
    <div className="flex h-[25px] items-center">
      <GoldIcon className="size-[23px]" />
      <span className="ml-[7px] text-[12px] font-bold">XAUUSD</span>
      <div className="flex-1" />
      <IconButton name="grid" size={21} className="w-9" />
      <IconButton name="edit" size={20} className="w-9" />
      <IconButton name="dots" label="More" size={20} className="ml-2" />
    </div>
    <div className="mt-[11px] flex h-5 items-center gap-[5px] text-[11px] font-bold">
      Gold Spot / U.S. Dollar
      <a href="#overview" aria-label="Open overview" className="text-[#8d8d8d]"><Icon size={14} sw={1.8}>{icons.link}</Icon></a>
      <span>· OANDA</span>
    </div>
    <div className="flex h-5 items-center text-[12px] text-[#8d8d8d]">Commodity • Cfd</div>
    <div className="mt-[9px] flex h-[34px] items-baseline text-[27px] leading-[34px] font-bold text-[#f0f0f0]">
      4,486.7<span className={UP}>8<span className="align-[5px] text-[20px]">5</span></span>
      <span className="ml-1 text-[11px] font-medium">USD</span>
    </div>
    <div className={clsx('mt-0.5 flex h-[22px] items-center gap-2 text-[15px] font-bold', DOWN)}><span>−36.265</span><span>−0.80%</span></div>
    <div className={clsx('flex h-[19px] items-center gap-1 pl-1 text-[13px]', UP)}><span className="size-2 rounded-full bg-[#26a17b]" />Market open</div>
    <article className="mt-2.5 h-[84px] rounded-lg bg-[#2e243c] px-[11px] pt-[7px] text-[12px] leading-4">
      <p className="text-[#9a94a6]"><span className="font-bold text-[#9863e8]">News</span> • 1 hour ago</p>
      <p className="mt-[3px] pr-4 text-[11px] leading-[15px] font-bold text-[#ececec]">Nifty down 5% while gold gains 35%: What this return gap means for your portfolio</p>
      <a href="#events" className="mt-1 block text-[#9a94a6]">More events ›</a>
    </article>
  </div>
)

const RightRail = () => (
  <nav className="flex w-[42px] shrink-0 flex-col items-center bg-[#0f0f0f]">
    {['list', 'clock', 'layers', 'chat'].map((n) => (
      <span key={n} className="flex h-[43px] items-center">
        <IconButton name={n} size={24} className={clsx('h-[34px] w-9 rounded-md', n === 'list' && 'bg-[#3a3a3a]')} />
      </span>
    ))}
    <div className="h-[79px]" />
    {['radar', 'pyramid', 'calendar', 'rss', 'bell'].map((n) => <IconButton key={n} name={n} size={26} className="h-[42px] w-9" />)}
    <button type="button" aria-label="Apps" className="mt-[7px] flex size-8 items-center justify-center rounded-full bg-white text-black">
      <Icon size={18} sw={0}><path fill="currentColor" d="M1 1h5v5H1zM10 1h5v5h-5zM19 1h5v5h-5zM1 10h5v5H1zM10 10h5v5h-5zM19 10h5v5h-5zM1 19h5v5H1zM10 19h5v5h-5zM19 19h5v5h-5z" /></Icon>
    </button>
    <div className="mt-2.5 h-px w-8 bg-[#4a4a4a]" />
    <IconButton name="help" size={26} className="mt-3.5" />
  </nav>
)

const App = () => (
  <div className="flex h-screen flex-col overflow-hidden bg-black pb-[37px] font-['Lato',sans-serif] text-[#dbdbdb]">
    <BrowserChrome />
    <Header />
    <main className="flex min-h-0 flex-1 bg-[#2e2e2e]">
      <LeftTools />
      <div className="ml-[3px] mt-[3px] flex min-w-0 flex-1 flex-col">
        <ChartPane />
        <BottomBar />
      </div>
      <aside className="relative ml-[3px] mt-[3px] flex w-[283px] shrink-0 flex-col gap-[5px] overflow-hidden">
        <Watchlist />
        <Details />
        <button type="button" aria-label="Hide panel" className="absolute bottom-[55px] left-0 h-6 w-[5px] rounded-r bg-black text-[11px] leading-6">›</button>
      </aside>
      <div className="ml-0.5 mt-[3px] flex"><RightRail /></div>
    </main>
  </div>
)

export default App
